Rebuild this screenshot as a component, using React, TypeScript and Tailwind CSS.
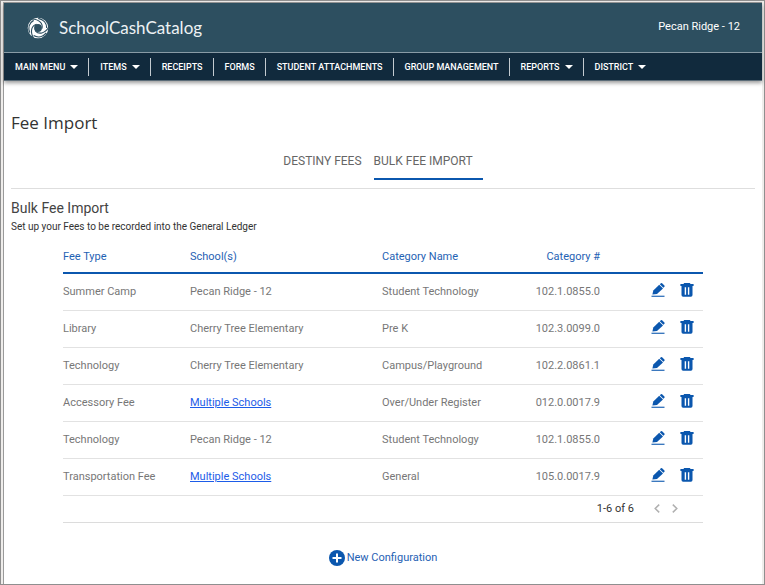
import React from "react";

const navItems: { label: string; menu?: boolean }[] = [
  { label: "MAIN MENU", menu: true },
  { label: "ITEMS", menu: true },
  { label: "RECEIPTS" },
  { label: "FORMS" },
  { label: "STUDENT ATTACHMENTS" },
  { label: "GROUP MANAGEMENT" },
  { label: "REPORTS", menu: true },
  { label: "DISTRICT", menu: true },
];

const fees = [
  { type: "Summer Camp", school: "Pecan Ridge - 12", category: "Student Technology", code: "102.1.0855.0" },
  { type: "Library", school: "Cherry Tree Elementary", category: "Pre K", code: "102.3.0099.0" },
  { type: "Technology", school: "Cherry Tree Elementary", category: "Campus/Playground", code: "102.2.0861.1" },
  { type: "Accessory Fee", school: "Multiple Schools", linked: true, category: "Over/Under Register", code: "012.0.0017.9" },
  { type: "Technology", school: "Pecan Ridge - 12", category: "Student Technology", code: "102.1.0855.0" },
  { type: "Transportation Fee", school: "Multiple Schools", linked: true, category: "General", code: "105.0.0017.9" },
];

const bladeAngles = [10, 130, 250];

function Logo() {
  return (
    <svg viewBox="-12 -12 24 24" className="size-6" aria-hidden="true">
      <circle r="7.1" fill="none" stroke="#fff" strokeWidth="6.4" />
      {bladeAngles.map((angle) => (
        <g key={angle} transform={`rotate(${angle})`} fill="none" stroke="#2d4f60">
          <path d="M4 0 C4.5 -5 0 -8.8 -7.5 -7.8" strokeWidth="1.1" />
          <path d="M8.6 -1.5 C7.8 -6.5 3.5 -9.4 -1.5 -9.5" strokeWidth="1.3" />
        </g>
      ))}
    </svg>
  );
}

function Caret() {
  return (
    <svg viewBox="0 0 8 4" className="mt-px h-1 w-2" aria-hidden="true">
      <path d="M0 0h8L4 4z" fill="currentColor" />
    </svg>
  );
}

function PencilIcon() {
  return (
    <svg viewBox="0 0 14 14" className="h-[14px] w-[14px]" aria-hidden="true">
      <path d="M0.5 12.7h13v1.1h-13z" fill="#0b57ae" />
      <path d="M1.4 11.4 L2.3 7.5 L8.2 1.7 L12 5.4 L6 10.9 Z" fill="#0b57ae" />
      <path d="M8.8 1.2 L9.9 0.3 Q10.5 -0.2 11.1 0.3 L13.4 2.6 Q13.9 3.1 13.4 3.7 L12.4 4.8 Z" fill="#0b57ae" />
    </svg>
  );
}

function TrashIcon() {
  return (
    <svg viewBox="0 0 14 14" className="h-[14px] w-[14px]" aria-hidden="true">
      <path d="M4.2 0h5.6l0.8 1h3v2H0.4V1h3z" fill="#0b57ae" />
      <path d="M1.5 2.8h11v9.3q0 1.6-1.6 1.6H3.1q-1.6 0-1.6-1.6zM4.7 4.2v7.5h1.4V4.2zM7.9 4.2v7.5h1.4V4.2z" fill="#0b57ae" fillRule="evenodd" />
    </svg>
  );
}

function Chevron({ flip = false }: { flip?: boolean }) {
  return (
    <svg viewBox="0 0 6 9" className={flip ? "h-[9px] w-[6px] rotate-180" : "h-[9px] w-[6px]"} aria-hidden="true">
      <path d="M5.2 0.6L1.2 4.5L5.2 8.4" fill="none" stroke="#b0b0b0" strokeWidth="1.5" />
    </svg>
  );
}

export default function App() {
  return (
    <div className="min-h-screen border border-[#8f8f8f] bg-[#efedeb] pt-px pr-[2px] pl-[2px] font-['Roboto',sans-serif]">
      <div className="flex min-h-[calc(100vh-3px)] flex-col border-t border-l border-[#9a9a9a] bg-white">
        <header className="shadow-[0_2px_4px_rgba(0,0,0,0.4)]">
          <div className="flex h-[49px] items-center justify-between bg-[#2d4f60] pr-[22px] pl-[22px] text-white">
            <div className="flex items-center gap-[9px] text-[#edf2f4]">
              <Logo />
              <span className="font-['Lato',sans-serif] text-[17px] leading-6">SchoolCashCatalog</span>
            </div>
            <span className="pb-px text-[11px] leading-4">Pecan Ridge - 12</span>
          </div>
          <nav className="flex h-[29px] items-center border-t border-b border-t-[#899ba6] border-b-[#5b6c78] bg-[#112a3d]">
            {navItems.map((item) => (
              <button
                key={item.label}
                type="button"
                className="flex h-[18px] items-center gap-[5px] border-l border-[#c3cbd0] pr-[10px] pl-[11px] text-[9px] leading-3 font-medium whitespace-nowrap text-white first:border-l-0"
              >
                {item.label}
                {item.menu && <Caret />}
              </button>
            ))}
          </nav>
        </header>

        <main className="px-[7px]">
          <h1 className="mt-[30px] font-['Open_Sans',sans-serif] text-[17px] leading-6 text-[#333]">Fee Import</h1>
          <div className="mt-[11px] flex justify-center gap-3 border-b border-[#dedede] pb-2 text-[12px] leading-4 text-[#666]">
            <button type="button" className="border-b-2 border-transparent pt-[7px] pb-[9px]">DESTINY FEES</button>
            <button type="button" className="border-b-2 border-[#0b57ae] pt-[7px] pr-[10px] pb-[9px]">BULK FEE IMPORT</button>
          </div>

          <h2 className="mt-[9px] text-[14px] leading-5 text-[#444]">Bulk Fee Import</h2>
          <p className="mt-[3px] text-[10px] leading-3 text-[#333]">Set up your Fees to be recorded into the General Ledger</p>

          <div className="mx-[52px] mt-[10px]">
            <table className="w-full table-fixed border-collapse text-[11px] leading-4 text-[#777]">
              <thead>
                <tr className="h-[30px] border-b-2 border-[#0b57ae] text-left text-[#1f62b4]">
                  <th scope="col" className="w-[127px] p-0 pb-[2px] font-normal">Fee Type</th>
                  <th scope="col" className="w-[192px] p-0 pb-[2px] font-normal">School(s)</th>
                  <th scope="col" className="w-[138px] p-0 pb-[2px] font-normal">Category Name</th>
                  <th scope="col" className="w-[80px] p-0 pb-[2px] text-right font-normal">Category #</th>
                  <th scope="col" className="p-0" aria-label="Actions" />
                </tr>
              </thead>
              <tbody>
                {fees.map((fee, i) => (
                  <tr key={i} className="h-[37px] border-b border-[#e2e2e2]">
                    <td className="p-0">{fee.type}</td>
                    <td className="p-0">
                      {fee.linked ? <a href="#schools" className="text-[#1d5ce8] underline">{fee.school}</a> : fee.school}
                    </td>
                    <td className="p-0">{fee.category}</td>
                    <td className="p-0 text-right">{fee.code}</td>
                    <td className="p-0">
                      <div className="flex justify-end gap-[15px] pr-[9px] pb-[3px]">
                        <button type="button" aria-label={`Edit ${fee.type}`}><PencilIcon /></button>
                        <button type="button" aria-label={`Delete ${fee.type}`}><TrashIcon /></button>
                      </div>
                    </td>
                  </tr>
                ))}
              </tbody>
            </table>
            <div className="flex h-[27px] items-center justify-end gap-[12px] border-b border-[#dcdcdc] pr-[25px] text-[11px] leading-4 text-[#333]">
              <span className="pr-2">1-6 of 6</span>
              <button type="button" aria-label="Previous page"><Chevron /></button>
              <button type="button" aria-label="Next page"><Chevron flip /></button>
            </div>
          </div>

          <div className="mt-[27px] flex justify-center">
            <button type="button" className="flex items-center gap-[2px] text-[11px] leading-4 text-[#1f62b4]">
              <svg viewBox="0 0 16 16" className="size-4" aria-hidden="true">
                <circle cx="8" cy="8" r="8" fill="#0b57ae" />
                <path d="M8 3.5v9M3.5 8h9" stroke="#fff" strokeWidth="2" />
              </svg>
              New Configuration
            </button>
          </div>
        </main>
      </div>
    </div>
  );
}
